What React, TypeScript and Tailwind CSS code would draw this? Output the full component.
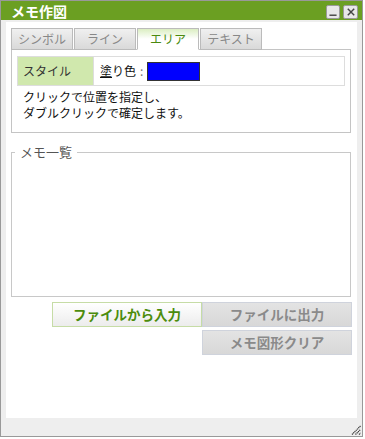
const jp = { fontFamily: '"Noto Sans CJK JP", "Noto Sans", sans-serif' };

function MinimizeIcon() {
  return (
    <svg viewBox="0 0 14 14" className="w-[10px] h-[10px]" aria-hidden="true">
      <path d="M2 11.5h10" stroke="#444" strokeWidth="2" />
    </svg>
  );
}

function CloseIcon() {
  return (
    <svg viewBox="0 0 14 14" className="w-[10px] h-[10px]" aria-hidden="true">
      <path d="M2.5 2.5l9 9M11.5 2.5l-9 9" stroke="#444" strokeWidth="2" />
    </svg>
  );
}

function ResizeGrip() {
  return (
    <svg viewBox="0 0 10 10" className="w-[10px] h-[10px]" aria-hidden="true">
      <path d="M1 9.5L9.5 1M4.5 9.5L9.5 4.5M8 9.5l1.5-1.5" stroke="#333" strokeWidth="1.2" strokeDasharray="1.2 0.6" />
    </svg>
  );
}

const tabs = [
  { label: 'シンボル', active: false },
  { label: 'ライン', active: false },
  { label: 'エリア', active: true },
  { label: 'テキスト', active: false },
];

export default function App() {
  return (
    <div className="w-[365px] h-[439px] bg-white" style={jp}>
      <div className="w-[363px] h-[437px] border border-[#999] bg-[#eee] flex flex-col">
        {/* title bar */}
        <div className="h-[19px] bg-[#6b9f22] flex items-center justify-between pl-[10px] pr-[4px]">
          <span className="text-white text-[14px] font-bold leading-none">メモ作図</span>
          <div className="flex gap-[3px] pt-[2px]">
            <button className="w-[14px] h-[14px] rounded-[2px] border border-[#9a9a9a] bg-[#e8e8e8] flex items-center justify-center">
              <MinimizeIcon />
            </button>
            <button className="w-[15px] h-[14px] rounded-[2px] border border-[#9a9a9a] bg-[#e8e8e8] flex items-center justify-center">
              <CloseIcon />
            </button>
          </div>
        </div>

        {/* body */}
        <div className="flex-1 flex flex-col pt-[2px]">
          <div className="flex-1 flex pl-[5px] pr-[5px]">
            <div className="flex-1 bg-white pt-[6px] pl-[5px] pr-[6px] flex flex-col">
              {/* tabs */}
              <div className="flex gap-[1px] -mb-px relative z-10">
                {tabs.map((t) =>
                  t.active ? (
                    <div
                      key={t.label}
                      className="w-[62px] h-[22px] border border-[#bbb] border-b-white bg-gradient-to-b from-[#dbeec2] via-white to-white flex items-center justify-center text-[12px] text-[#4a8a0e]"
                    >
                      {t.label}
                    </div>
                  ) : (
                    <div
                      key={t.label}
                      className="w-[62px] h-[22px] border border-[#bbb] bg-gradient-to-b from-[#f0f0f0] to-[#d9d9d9] flex items-center justify-center text-[12px] text-[#888]"
                    >
                      {t.label}
                    </div>
                  )
                )}
              </div>

              {/* tab panel */}
              <div className="border border-[#c4c4c4] pt-[6px] pl-[5px] pr-[5px] pb-[11px]">
                <div className="flex h-[30px] border border-[#ddd]">
                  <div className="w-[76px] bg-[#d0e8ad] border-r border-[#ddd] flex items-center pl-[5px] text-[12px] text-[#333]">
                    スタイル
                  </div>
                  <div className="flex-1 flex items-center pl-[6px] text-[12px] text-[#111]">
                    <span>
                      <span className="underline">塗</span>り色
                    </span>
                    <span className="text-[#777] pl-[4px] pr-[4px]">:</span>
                    <span className="w-[53px] h-[19px] border border-[#333] bg-[#0000ff]" />
                  </div>
                </div>
                <p className="mt-[3px] pl-[6px] text-[12px] leading-[16px] text-[#111]">
                  クリックで位置を指定し、
                  <br />
                  ダブルクリックで確定します。
                </p>
              </div>

              {/* memo list */}
              <fieldset className="mt-[11px] h-[153px] border border-[#c8c8c8]">
                <legend className="ml-[3px] px-[5px] text-[13px] leading-[16px] text-[#555]">メモ一覧</legend>
              </fieldset>

              {/* buttons */}
              <div className="mt-[5px] flex justify-end -mr-px">
                <button className="w-[150px] h-[25px] border border-[#c6dca6] bg-gradient-to-b from-white to-[#ececec] text-[13.5px] font-bold text-[#4c8c0c]">
                  ファイルから入力
                </button>
                <button className="w-[150px] h-[25px] border border-[#cfd3dc] bg-gradient-to-b from-[#e3e3e3] to-[#d8d8d8] text-[13.5px] font-bold text-[#8a8a8a]">
                  ファイルに出力
                </button>
              </div>
              <div className="mt-[3px] flex justify-end -mr-px">
                <button className="w-[150px] h-[25px] border border-[#cfd3dc] bg-gradient-to-b from-[#e3e3e3] to-[#d8d8d8] text-[13.5px] font-bold text-[#8a8a8a]">
                  メモ図形クリア
                </button>
              </div>
            </div>
          </div>
          <div className="h-[18px] flex justify-end items-end pr-[1px] pb-[1px]">
            <ResizeGrip />
          </div>
        </div>
      </div>
    </div>
  );
}
